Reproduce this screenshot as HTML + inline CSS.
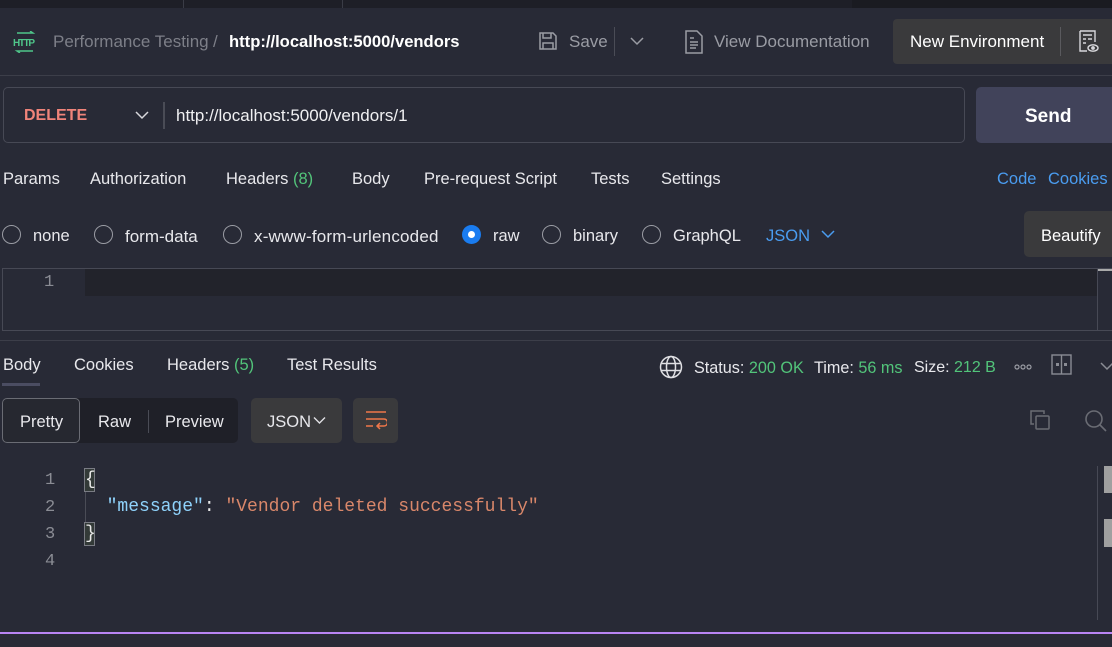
<!DOCTYPE html>
<html><head><meta charset="utf-8"><style>
*{margin:0;padding:0;box-sizing:border-box}
body{width:1112px;height:647px;overflow:hidden;background:#282a36;font-family:"Liberation Sans",sans-serif;color:#e8e8ec;position:relative;font-size:16px}
.a{position:absolute;white-space:nowrap}
.g{color:#52c47a}
.blue{color:#4a9cf0}
.mono{font-family:"Liberation Mono",monospace}
.radio{position:absolute;width:19px;height:19px;border:1.5px solid #9a9ca4;border-radius:50%}
</style></head><body>
<div class="a" style="left:0;top:0;width:1112px;height:8px;background:#1e1f27"></div>
<div class="a" style="left:183px;top:0;width:1px;height:8px;background:#3a3c46"></div>
<div class="a" style="left:342px;top:0;width:1px;height:8px;background:#3a3c46"></div>
<div class="a" style="left:852px;top:0;width:260px;height:8px;background:#1a1b21"></div>

<svg class="a" style="left:13px;top:31px" width="24" height="22" viewBox="0 0 24 22"><g stroke="#4fc68a" fill="none" stroke-width="1.4"><path d="M4 2h16l-3-2M20 20H4l3 2"/></g><text x="0" y="15" font-size="10" font-weight="bold" fill="#4fc68a" font-family="Liberation Sans" textLength="22">HTTP</text></svg>
<div class="a" style="left:53px;top:32px;color:#7d7f88;font-size:17px">Performance Testing</div>
<div class="a" style="left:213px;top:32px;color:#7d7f88;font-size:17px">/</div>
<div class="a" style="left:229px;top:32px;font-weight:bold;font-size:16.6px;color:#fff">http://localhost:5000/vendors</div>
<svg class="a" style="left:538px;top:31px" width="20" height="20" viewBox="0 0 20 20"><g fill="none" stroke="#9a9ca4" stroke-width="1.5"><path d="M2 2h13l3 3v13H2z"/><path d="M5 2v5h8V2M5 18v-6h10v6"/></g></svg>
<div class="a" style="left:569px;top:32px;color:#9a9ca4;font-size:17px">Save</div>
<div class="a" style="left:614px;top:27px;width:1px;height:29px;background:#4a4c56"></div>
<svg class="a" style="left:630px;top:36px" width="14" height="10"><path d="M1 2l6 6 6-6" stroke="#9a9ca4" fill="none" stroke-width="1.5"/></svg>
<svg class="a" style="left:685px;top:30px" width="18" height="24" viewBox="0 0 18 24"><g fill="none" stroke="#9a9ca4" stroke-width="1.5"><path d="M1 1h11l5 5v17H1z"/><path d="M5 8h4M5 12h8M5 15h8M5 18h6"/></g></svg>
<div class="a" style="left:714px;top:32px;color:#9a9ca4;font-size:17px">View Documentation</div>
<div class="a" style="left:893px;top:19px;width:219px;height:45px;background:#3a3a3c;border-radius:4px 0 0 4px"></div>
<div class="a" style="left:910px;top:32px;color:#fff;font-size:17px">New Environment</div>
<div class="a" style="left:1060px;top:27px;width:1px;height:29px;background:#5a5a5e"></div>
<svg class="a" style="left:1078px;top:30px" width="22" height="24" viewBox="0 0 22 24"><g fill="none" stroke="#d8d8dc" stroke-width="1.4"><path d="M2 1h15v11M2 1v20h7M5 5h9M5 9h3M10 9h4M5 13h3"/><ellipse cx="15" cy="18" rx="5" ry="3.2"/><circle cx="15" cy="18" r="1.2" fill="#d8d8dc"/></g></svg>
<div class="a" style="left:0;top:75px;width:1112px;height:1px;background:#3c3e49"></div>

<div class="a" style="left:3px;top:87px;width:962px;height:56px;border:1px solid #474955;border-radius:5px"></div>
<div class="a" style="left:24px;top:107px;color:#f0847a;font-weight:bold;font-size:16px">DELETE</div>
<svg class="a" style="left:135px;top:110px" width="14" height="10"><path d="M1 2l6 6 6-6" stroke="#d8d8dc" fill="none" stroke-width="1.5"/></svg>
<div class="a" style="left:163px;top:102px;width:2px;height:27px;background:#4a4c56"></div>
<div class="a" style="left:176px;top:106px;color:#f0f0f2;font-size:17px">http://localhost:5000/vendors/1</div>
<div class="a" style="left:976px;top:87px;width:136px;height:56px;background:#41435a;border-radius:5px 0 0 5px"></div>
<div class="a" style="left:1025px;top:106px;color:#fff;font-weight:bold;font-size:19px">Send</div>

<div class="a" style="top:170px;left:3px;font-size:16.5px">Params</div>
<div class="a" style="top:170px;left:90px;font-size:16.5px">Authorization</div>
<div class="a" style="top:170px;left:226px;font-size:16.5px">Headers <span class="g">(8)</span></div>
<div class="a" style="top:170px;left:352px;font-size:16.5px">Body</div>
<div class="a" style="top:170px;left:424px;font-size:16.5px">Pre-request Script</div>
<div class="a" style="top:170px;left:591px;font-size:16.5px">Tests</div>
<div class="a" style="top:170px;left:661px;font-size:16.5px">Settings</div>
<div class="a blue" style="top:170px;left:997px;font-size:16.5px">Code</div>
<div class="a blue" style="top:170px;left:1048px;font-size:16.5px">Cookies</div>

<div class="radio" style="left:2px;top:225px"></div><div class="a" style="left:33px;top:227px;font-size:16.5px">none</div>
<div class="radio" style="left:94px;top:225px"></div><div class="a" style="left:125px;top:227px;font-size:17px">form-data</div>
<div class="radio" style="left:223px;top:225px"></div><div class="a" style="left:254px;top:227px;font-size:17px;letter-spacing:0.2px">x-www-form-urlencoded</div>
<div class="a" style="left:462px;top:225px;width:19px;height:19px;border-radius:50%;background:#1a7cf0"><div style="position:absolute;left:6px;top:6px;width:7px;height:7px;border-radius:50%;background:#fff"></div></div><div class="a" style="left:493px;top:227px;font-size:16.5px">raw</div>
<div class="radio" style="left:542px;top:225px"></div><div class="a" style="left:573px;top:227px;font-size:16.5px">binary</div>
<div class="radio" style="left:642px;top:225px"></div><div class="a" style="left:673px;top:227px;font-size:16.5px">GraphQL</div>
<div class="a blue" style="left:766px;top:227px;font-size:16.5px">JSON</div>
<svg class="a" style="left:821px;top:229px" width="14" height="10"><path d="M1 2l6 6 6-6" stroke="#4a9cf0" fill="none" stroke-width="1.5"/></svg>
<div class="a" style="left:1024px;top:211px;width:88px;height:46px;background:#3a3a3c;border-radius:5px 0 0 5px"></div>
<div class="a" style="left:1041px;top:227px;font-size:16.5px;color:#fff">Beautify</div>

<div class="a" style="left:2px;top:268px;width:1112px;height:63px;border:1px solid #474955"></div>
<div class="a" style="left:85px;top:269px;width:1012px;height:27px;background:#22232b"></div>
<div class="a" style="left:1097px;top:269px;width:1px;height:61px;background:#474955"></div>
<div class="a" style="left:1098px;top:269px;width:14px;height:2px;background:#aaa"></div>
<div class="a mono" style="left:44px;top:273px;color:#8a8c94;font-size:17px">1</div>
<div class="a" style="left:0;top:340px;width:1112px;height:1px;background:#3c3e49"></div>

<div class="a" style="top:356px;left:3px;font-size:16.5px">Body</div>
<div class="a" style="left:2px;top:383px;width:38px;height:3px;background:#4b4d62"></div>
<div class="a" style="top:356px;left:74px;font-size:16.5px">Cookies</div>
<div class="a" style="top:356px;left:167px;font-size:16.5px">Headers <span class="g">(5)</span></div>
<div class="a" style="top:356px;left:287px;font-size:16.5px">Test Results</div>
<svg class="a" style="left:659px;top:355px" width="24" height="24" viewBox="0 0 24 24"><g fill="none" stroke="#e0e0e4" stroke-width="1.5"><circle cx="12" cy="12" r="10.5"/><ellipse cx="12" cy="12" rx="4.5" ry="10.5"/><path d="M2 8.5h20M2 15.5h20"/></g></svg>
<div class="a" style="left:694px;top:359px;font-size:16.2px">Status: <span class="g">200 OK</span></div>
<div class="a" style="left:814px;top:359px;font-size:16.2px">Time: <span class="g">56 ms</span></div>
<div class="a" style="left:914px;top:359px;font-size:16px">Size: <span class="g">212 B</span></div>
<svg class="a" style="left:1014px;top:363px" width="18" height="8"><g fill="none" stroke="#9a9ca4" stroke-width="1.2"><circle cx="3" cy="4" r="2"/><circle cx="9" cy="4" r="2"/><circle cx="15" cy="4" r="2"/></g></svg>
<svg class="a" style="left:1051px;top:354px" width="22" height="22"><g fill="none" stroke="#8a8c94" stroke-width="1.4"><rect x="1" y="1" width="19" height="19"/><path d="M10.5 1v19"/></g><rect x="5" y="9" width="3" height="3" fill="#8a8c94"/><rect x="13" y="9" width="3" height="3" fill="#8a8c94"/></svg>
<svg class="a" style="left:1100px;top:361px" width="12" height="10"><path d="M1 2l6 6 6-6" stroke="#8a8c94" fill="none" stroke-width="1.5"/></svg>

<div class="a" style="left:2px;top:398px;width:236px;height:45px;background:#1f2028;border-radius:5px"></div>
<div class="a" style="left:2px;top:398px;width:78px;height:45px;border:1px solid #6a6c74;border-radius:5px;background:#262830"></div>
<div class="a" style="left:20px;top:413px;font-size:16.5px">Pretty</div>
<div class="a" style="left:98px;top:413px;font-size:16.5px">Raw</div>
<div class="a" style="left:148px;top:410px;width:1px;height:23px;background:#4a4c56"></div>
<div class="a" style="left:165px;top:413px;font-size:16.5px">Preview</div>
<div class="a" style="left:251px;top:398px;width:91px;height:45px;background:#3a3a3c;border-radius:5px"></div>
<div class="a" style="left:267px;top:413px;font-size:16.5px">JSON</div>
<svg class="a" style="left:313px;top:416px" width="13" height="9"><path d="M1 1.5l5.5 5.5 5.5-5.5" stroke="#e0e0e4" fill="none" stroke-width="1.4"/></svg>
<div class="a" style="left:353px;top:398px;width:45px;height:45px;background:#3a3a3c;border-radius:5px"></div>
<svg class="a" style="left:365px;top:410px" width="22" height="22"><g fill="none" stroke="#f0774a" stroke-width="1.5"><path d="M1 2h20M1 9h18a3.5 3.5 0 0 1 0 7h-7M15 13l-3 3 3 3M1 16h7"/></g></svg>
<svg class="a" style="left:1029px;top:409px" width="22" height="22"><g fill="none" stroke="#6a6c74" stroke-width="1.5"><path d="M5 15H2V2h13v3"/><rect x="7" y="7" width="13" height="13" rx="1"/></g></svg>
<svg class="a" style="left:1084px;top:409px" width="28" height="24"><g fill="none" stroke="#6a6c74" stroke-width="1.6"><circle cx="10" cy="10" r="8"/><path d="M16 16l6 6"/></g></svg>

<div class="a mono" style="left:45px;top:467px;color:#8a8c94;font-size:17px;line-height:27px">1<br>2<br>3<br>4</div>
<div class="a" style="left:84px;top:468px;width:11px;height:24px;border:1px solid #7a7c84;background:#333a38"></div>
<div class="a" style="left:84px;top:522px;width:11px;height:24px;border:1px solid #7a7c84;background:#333a38"></div>
<div class="a" style="left:85px;top:492px;width:1px;height:30px;background:#4a4c56"></div>
<div class="a mono" style="left:85px;top:467px;font-size:18px;line-height:27px;color:#e8e8e8">{<br>&nbsp;&nbsp;<span style="color:#8fd2fb">"message"</span>: <span style="color:#d9876a">"Vendor deleted successfully"</span><br>}</div>
<div class="a" style="left:1097px;top:466px;width:1px;height:154px;background:#474955"></div>
<div class="a" style="left:1104px;top:466px;width:8px;height:27px;background:#a0a0a0"></div>
<div class="a" style="left:1104px;top:519px;width:8px;height:28px;background:#a0a0a0"></div>
<div class="a" style="left:0;top:632px;width:1112px;height:2px;background:#b984f4"></div>
</body></html>
